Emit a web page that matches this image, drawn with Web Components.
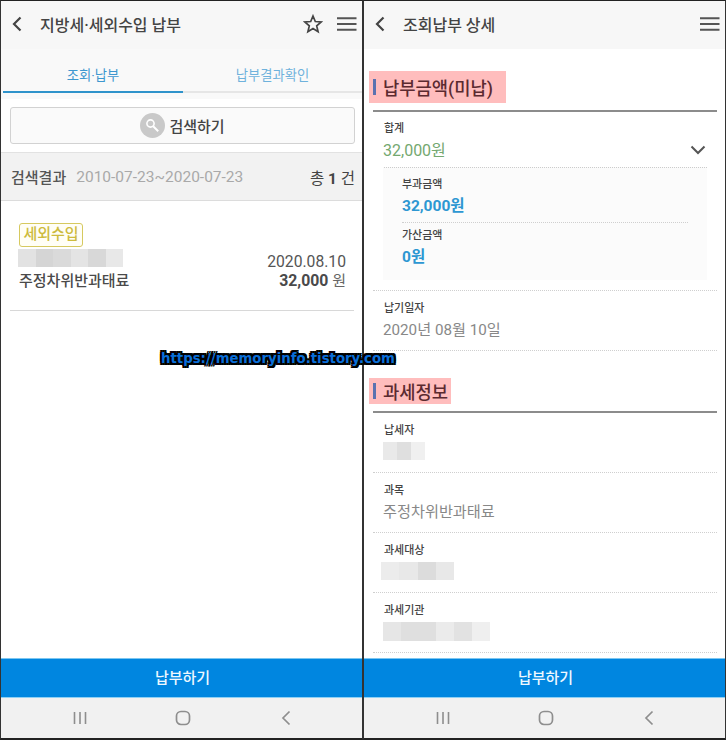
<!DOCTYPE html>
<html lang="ko"><head><meta charset="utf-8"><title>납부</title>
<style>
html,body{margin:0;padding:0;background:#fff}
body{width:726px;height:740px;overflow:hidden;font-family:Roboto,"Noto Sans CJK KR",sans-serif;color:#444}
</style></head><body>
<split-view>
  <app-screen>
    <app-header star>지방세·세외수입 납부</app-header>
    <tab-bar></tab-bar>
    <search-button></search-button>
    <result-bar></result-bar>
    <result-card></result-card>
    <pay-button slot="bottom"></pay-button>
    <nav-bar slot="bottom"></nav-bar>
  </app-screen>
  <app-screen>
    <app-header>조회납부 상세</app-header>
    <section-head style="--mt:22px;--h:32px;--w:137px">납부금액(미납)</section-head>
    <detail-row label="합계" value="32,000원" tone="green" chevron dense></detail-row>
    <sub-panel>
      <sub-item label="부과금액" value="32,000원" line></sub-item>
      <sub-item label="가산금액" value="0원"></sub-item>
    </sub-panel>
    <detail-row label="납기일자" value="2020년 08월 10일"></detail-row>
    <section-head style="--mt:27px;--h:26px;--w:82px;--gap:7px">과세정보</section-head>
    <detail-row label="납세자" blur="42:18"></detail-row>
    <detail-row label="과목" value="주정차위반과태료"></detail-row>
    <detail-row label="과세대상" blur="73:18" shift></detail-row>
    <detail-row label="과세기관" blur="107:19"></detail-row>
    <pay-button slot="bottom"></pay-button>
    <nav-bar slot="bottom"></nav-bar>
  </app-screen>
  <water-mark>https://memoryinfo.tistory.com</water-mark>
</split-view>
<script>
function def(name,css,html){
  customElements.define(name,class extends HTMLElement{
    connectedCallback(){
      if(this.shadowRoot)return;
      const r=this.attachShadow({mode:'open'});
      const h=typeof html==='function'?html(this):html;
      r.innerHTML='<style>'+css+'</style>'+h;
    }
  });
}
def('split-view',`:host{display:grid;grid-template-columns:363px 363px;width:726px;height:740px;position:relative;box-sizing:border-box;background:#333}`,`<slot></slot>`);
def('app-screen',`:host{display:flex;flex-direction:column;height:740px;box-sizing:border-box;background:#fff;border-top:1px solid #222;border-bottom:2px solid #222;border-left:1px solid #333;border-right:1px solid #333;overflow:hidden}
.main{flex:1;min-height:0;display:flex;flex-direction:column}.bottom{display:flex;flex-direction:column}`,`<div class="main"><slot></slot></div><div class="bottom"><slot name="bottom"></slot></div>`);
def('app-header',`:host{display:flex;align-items:center;height:48px;box-sizing:border-box;padding-bottom:2px;background:#f7f7f7;flex:none;color:#444}
.back{margin-left:10px;width:12px;height:16px;flex:none}
.t{margin-left:17px;flex:1;font-size:16px;font-weight:500;white-space:nowrap}
.star{width:20px;height:20px;margin-right:14px}.menu{width:20px;height:14px;margin-right:5px}`,
el=>`<svg class="back" viewBox="0 0 12 16"><path d="M9.5 1.5 3 8l6.5 6.5" fill="none" stroke="#444" stroke-width="2.2"/></svg><span class="t"><slot></slot></span>
${el.hasAttribute('star')?`<svg class="star" viewBox="0 0 20 20"><path d="M10 2l2.3 5.5 5.9.5-4.5 3.9 1.4 5.8L10 14.6l-5.1 3.1 1.4-5.8L1.8 8l5.9-.5z" fill="none" stroke="#444" stroke-width="1.7" stroke-linejoin="miter"/></svg>`:''}
<svg class="menu" viewBox="0 0 20 14"><path d="M0 1.2h19.5M0 7h19.5M0 12.8h19.5" stroke="#555" stroke-width="2"/></svg>`);
def('tab-bar',`:host{display:block;background:#f9f9f9;padding:0 0 6px 2px;flex:none}
.w{display:grid;grid-template-columns:180px 1fr;height:44px;font-size:13.3px;text-align:center;color:#3d97cf}
.a{border-bottom:2px solid #2f93cb;height:42px;line-height:53px}.b{border-bottom:2px solid #e6e6e6;height:42px;line-height:53px;color:#6fb2dc}`,
`<div class="w"><div class="a">조회·납부</div><div class="b">납부결과확인</div></div>`);
def('search-button',`:host{display:block;padding:8px 7px 8px 9px;background:#fff;flex:none}
.b{height:35px;border:1px solid #d2d2d2;border-radius:3px;background:#fafafa;display:flex;align-items:center;justify-content:center;gap:4px;font-size:15px;font-weight:500;color:#444}
svg{width:25px;height:25px}`,
`<div class="b"><svg viewBox="0 0 25 25"><circle cx="12.5" cy="12.5" r="12.5" fill="#c9c9c9"/><circle cx="10.5" cy="10.5" r="3.6" fill="none" stroke="#fff" stroke-width="1.6"/><path d="M13.2 13.2l5 5" stroke="#fff" stroke-width="2"/></svg><span>검색하기</span></div>`);
def('result-bar',`:host{display:flex;align-items:center;height:47px;flex:none;background:#f2f2f2;border-top:1px solid #e2e2e2;border-bottom:1px solid #dcdcdc;padding:0 7px 0 10px;font-size:15px}
.l{font-weight:500;color:#555}.d{margin-left:10px;color:#a9a9a9;flex:1;font-size:15.5px}.r{color:#444;font-size:15.5px}b{font-weight:700}`,
`<span class="l">검색결과</span><span class="d">2010-07-23~2020-07-23</span><span class="r">총 <b>1</b> 건</span>`);
def('blur-block',`:host{display:flex;height:var(--h,18px);width:var(--w,100px)}
i{flex:1;display:block}`,el=>(el.getAttribute('shades')||'#e6e6e6').split(',').map(c=>`<i style="background:${c}"></i>`).join(''));
def('result-card',`:host{display:block;padding:22px 8px 0 9px;background:#fff;flex:none}
.c{border-bottom:1px solid #d8d8d8;height:87px;padding:0 8px}
.badge{display:inline-block;box-sizing:border-box;height:24px;line-height:21px;width:64px;border:1px solid #d6c95f;border-radius:3px;color:#cdbb3d;font-size:15px;font-weight:500;text-align:center;background:#fffef6;margin-left:1px;vertical-align:top}
.r1{display:flex;justify-content:space-between;align-items:center;height:20px;margin-top:1px}
.r1 blur-block{--w:105px;--h:18px}
.date{font-size:15.7px;color:#555;position:relative;top:3px}
.r2{display:flex;justify-content:space-between;margin-top:1px;font-size:15px;height:24px;line-height:24px;font-weight:500;color:#4a4a4a;padding-left:1px}
.r2 b{font-weight:700;font-size:15.8px}.r2 em{font-style:normal;font-weight:400;color:#666}`,
`<div class="c"><span class="badge">세외수입</span><div class="r1"><blur-block shades="#e2e2e2,#d5d5d5,#dadada,#e4e4e4,#d8d8d8,#e8e8e8"></blur-block><span class="date">2020.08.10</span></div><div class="r2"><span>주정차위반과태료</span><span><b>32,000</b> <em>원</em></span></div></div>`);
def('pay-button',`:host{display:block;height:40px;line-height:39px;background:#0086e0;color:#eef8ff;text-align:center;font-size:15px;font-weight:500;border-top:1px solid #7cc6f0;border-bottom:1px solid #8fd0f4;box-sizing:border-box;padding-left:2px}`,`납부하기`);
def('nav-bar',`:host{display:grid;grid-template-columns:103px 103px 103px;justify-content:center;height:40px;background:#f1f1f1;align-items:center;justify-items:center;padding-left:2px}
svg{width:24px;height:20px}`,
`<svg viewBox="0 0 24 20"><path d="M6.5 4v12M12 4v12M17.5 4v12" stroke="#8e8e8e" stroke-width="1.6"/></svg><svg viewBox="0 0 24 20"><rect x="5.5" y="3.5" width="13" height="13" rx="4.5" fill="none" stroke="#8e8e8e" stroke-width="1.7"/></svg><svg viewBox="0 0 24 20"><path d="M15.5 3.5 9 10l6.5 6.5" fill="none" stroke="#8e8e8e" stroke-width="1.7"/></svg>`);
def('section-head',`:host{display:block;margin:var(--mt) 8px 0 9px;padding-bottom:var(--gap,7px);border-bottom:2px solid #8c8c8c;flex:none}
.p{display:flex;align-items:center;box-sizing:border-box;margin-left:-4px;width:var(--w);height:var(--h);background:#ffbdbd;padding-left:4px;font-size:17.7px;font-weight:500;color:#5b2a30;white-space:nowrap}
.bar{width:3px;height:16px;background:#5a72b0;flex:none;margin-right:7px}`,
`<div class="p"><span class="bar"></span><span><slot></slot></span></div>`);
const shades={'42':'#e9e9e9,#dfdfdf,#f0f0f0','73':'#ececec,#e8e8e8,#dcdcdc,#e8e8e8','107':'#e6e6e6,#dfdfdf,#dfdfdf,#ebebeb,#e2e2e2,#efefef'};
def('detail-row',`:host{display:block;margin:0 8px 0 9px;height:60px;box-sizing:border-box;border-bottom:1px dotted #cfcfcf;padding:9px 0 0 11px;position:relative;flex:none}
.l{font-size:11px;font-weight:500;color:#444;line-height:18px;height:18px}
.v{font-size:15.2px;color:#888;line-height:25px;height:25px;margin-top:0;margin-left:-1px}
.green{color:#74a86f;font-size:16px}
blur-block{margin-top:2px;margin-left:-1px}.s{margin-left:-3px}
svg{position:absolute;right:19px;top:33px;width:16px;height:10px}
:host([dense]){height:55px;margin-right:0;border:0;padding-top:8px}
:host([dense]) .wrap{border-bottom:1px dotted #ccc;height:47px;margin-right:18px}`,
el=>{const b=el.getAttribute('blur');let blur='';if(b){const [w,h]=b.split(':');blur=`<blur-block class="${el.hasAttribute('shift')?'s':''}" shades="${shades[w]}" style="--w:${w}px;--h:${h}px"></blur-block>`;}
return `<div class="wrap"><div class="l">${el.getAttribute('label')}</div>${el.getAttribute('value')?`<div class="v ${el.getAttribute('tone')||''}">${el.getAttribute('value')}</div>`:''}${blur}</div>${el.hasAttribute('chevron')?'<svg viewBox="0 0 16 10"><path d="M1.5 1.5 8 8l6.5-6.5" fill="none" stroke="#555" stroke-width="2"/></svg>':''}`;});
def('sub-panel',`:host{display:block;margin:0 8px 0 9px;border-bottom:1px dotted #cfcfcf;padding:0 10px 10px 10px;flex:none}
.in{background:#fbfbfb;padding:9px 19px 0 19px;height:113px;box-sizing:border-box}`,`<div class="in"><slot></slot></div>`);
def('sub-item',`:host{display:block;box-sizing:border-box;padding-top:4px}
:host([line]){height:47px;border-bottom:1px dotted #cfcfcf;padding-top:0}
.l{font-size:11px;font-weight:500;color:#444;line-height:18px}
.v{font-size:15.5px;font-weight:700;color:#2d97d2;line-height:25px}`,
el=>`<div class="l">${el.getAttribute('label')}</div><div class="v">${el.getAttribute('value')}</div>`);
def('water-mark',`:host{position:absolute;left:161px;top:349px;font-family:"DejaVu Sans",sans-serif;font-size:13.3px;font-weight:700;line-height:20px;color:#0a6ed8;white-space:nowrap;text-shadow:-2px 0 0 #000,2px 0 0 #000,0 -2px 0 #000,0 2px 0 #000,-2px -2px 0 #000,2px -2px 0 #000,-2px 2px 0 #000,2px 2px 0 #000}`,`<slot></slot>`);
</script>
</body></html>
